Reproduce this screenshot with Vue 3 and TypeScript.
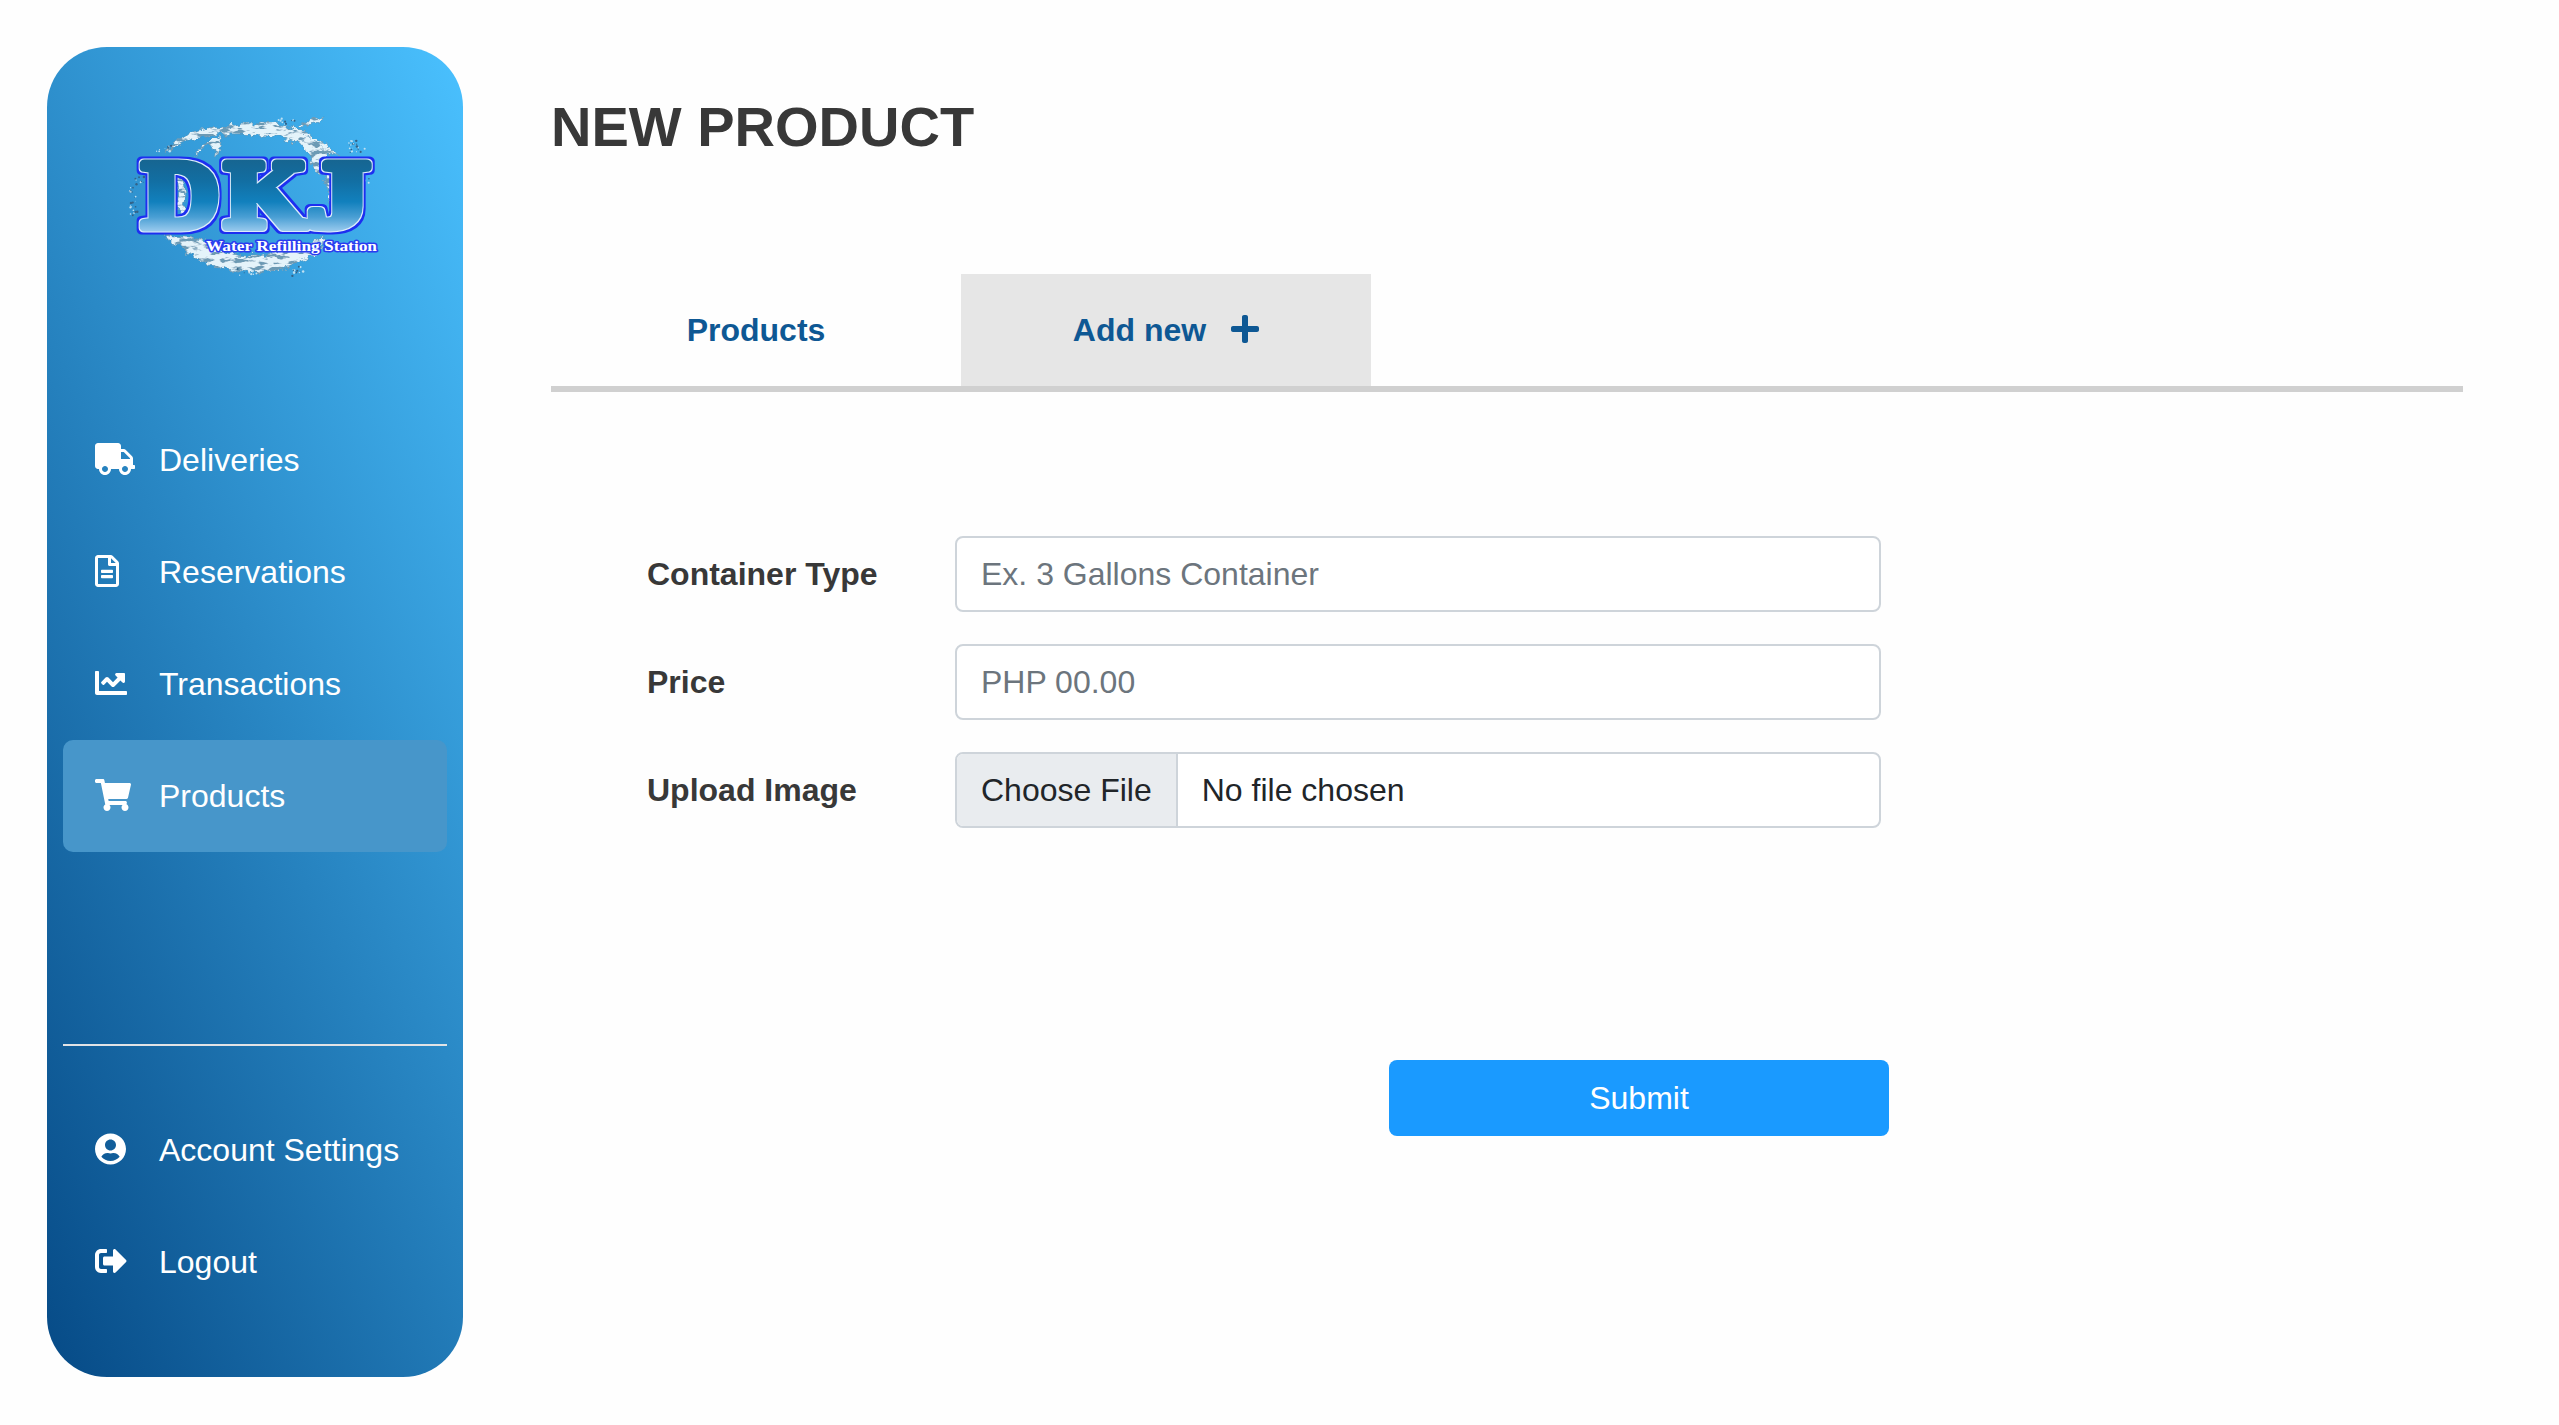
<script setup lang="ts">
interface NavItem {
  label: string
  viewBox: string
  width: number
  path: string
  active?: boolean
}

const mainNav: NavItem[] = [
  {
    label: 'Deliveries',
    viewBox: '0 0 640 512',
    width: 40,
    path: 'M624 352h-16V243.900c0-12.700-5.100-24.900-14.100-33.900L494 110.100c-9-9-21.200-14.100-33.900-14.100H416V48c0-26.500-21.500-48-48-48H48C21.500 0 0 21.500 0 48v320c0 26.500 21.500 48 48 48h16c0 53 43 96 96 96s96-43 96-96h128c0 53 43 96 96 96s96-43 96-96h48c8.800 0 16-7.200 16-16v-32c0-8.800-7.200-16-16-16zM160 464c-26.500 0-48-21.500-48-48s21.500-48 48-48 48 21.500 48 48-21.500 48-48 48zm320 0c-26.500 0-48-21.500-48-48s21.500-48 48-48 48 21.500 48 48-21.500 48-48 48zm80-208H416V144h44.100l99.900 99.900V256z',
  },
  {
    label: 'Reservations',
    viewBox: '0 0 384 512',
    width: 24,
    path: 'M288 248v28c0 6.600-5.400 12-12 12H108c-6.600 0-12-5.400-12-12v-28c0-6.600 5.400-12 12-12h168c6.600 0 12 5.400 12 12zm-12 72H108c-6.600 0-12 5.400-12 12v28c0 6.600 5.400 12 12 12h168c6.600 0 12-5.400 12-12v-28c0-6.600-5.400-12-12-12zm108-188.100V464c0 26.500-21.500 48-48 48H48c-26.500 0-48-21.500-48-48V48C0 21.500 21.500 0 48 0h204.100C264.800 0 277 5.100 286 14.100L369.900 98c9 8.900 14.100 21.200 14.100 33.900zm-128-80V128h76.100L256 51.900zM336 464V176H232c-13.300 0-24-10.700-24-24V48H48v416h288z',
  },
  {
    label: 'Transactions',
    viewBox: '0 0 512 512',
    width: 32,
    path: 'M496 384H64V80c0-8.840-7.160-16-16-16H16C7.160 64 0 71.160 0 80v336c0 17.670 14.330 32 32 32h464c8.840 0 16-7.160 16-16v-32c0-8.840-7.160-16-16-16zM464 96H345.940c-21.380 0-32.090 25.850-16.970 40.970l32.400 32.400L288 242.750l-73.370-73.370c-12.500-12.500-32.760-12.500-45.250 0l-68.690 68.690c-6.250 6.250-6.250 16.380 0 22.630l22.620 22.620c6.250 6.250 16.380 6.250 22.630 0L192 237.250l73.370 73.370c12.500 12.500 32.760 12.500 45.250 0l96-96 32.400 32.400c15.120 15.120 40.970 4.410 40.970-16.970V112c.01-8.840-7.150-16-15.990-16z',
  },
  {
    label: 'Products',
    viewBox: '0 0 576 512',
    width: 36,
    active: true,
    path: 'M528.120 301.319l47.273-208C578.806 78.301 567.391 64 551.990 64H159.208l-9.166-44.810C147.758 8.021 137.930 0 126.529 0H24C10.745 0 0 10.745 0 24v16c0 13.255 10.745 24 24 24h69.883l70.248 343.435C147.325 417.100 136 435.222 136 456c0 30.928 25.072 56 56 56s56-25.072 56-56c0-15.674-6.447-29.835-16.824-40h209.647C430.447 426.165 424 440.326 424 456c0 30.928 25.072 56 56 56s56-25.072 56-56c0-22.172-12.888-41.332-31.579-50.405l5.517-24.276c3.413-15.018-8.002-29.319-23.403-29.319H218.117l-6.545-32h293.145c11.206 0 20.920-7.754 23.403-18.681z',
  },
]

const accountNav: NavItem[] = [
  {
    label: 'Account Settings',
    viewBox: '0 0 496 512',
    width: 31,
    path: 'M248 8C111 8 0 119 0 256s111 248 248 248 248-111 248-248S385 8 248 8zm0 96c48.600 0 88 39.400 88 88s-39.400 88-88 88-88-39.400-88-88 39.400-88 88-88zm0 344c-58.700 0-111.300-26.600-146.500-68.200 18.800-35.400 55.600-59.800 98.500-59.800 2.400 0 4.800.4 7.100 1.100 13 4.200 26.600 6.900 40.900 6.900 14.300 0 28-2.700 40.900-6.900 2.300-.7 4.700-1.100 7.100-1.100 42.900 0 79.700 24.400 98.500 59.800C359.300 421.400 306.700 448 248 448z',
  },
  {
    label: 'Logout',
    viewBox: '0 0 512 512',
    width: 32,
    path: 'M497 273L329 441c-15 15-41 4.500-41-17v-96H152c-13.300 0-24-10.700-24-24v-96c0-13.300 10.700-24 24-24h136V88c0-21.400 25.900-32 41-17l168 168c9.300 9.400 9.300 24.600 0 34zM192 436v-40c0-6.600-5.400-12-12-12H96c-17.700 0-32-14.300-32-32V160c0-17.700 14.300-32 32-32h84c6.600 0 12-5.400 12-12V76c0-6.600-5.400-12-12-12H96c-53 0-96 43-96 96v192c0 53 43 96 96 96h84c6.600 0 12-5.400 12-12z',
  },
]

// Letters of the wordmark: x position and drawn width
const letters = [
  { char: 'D', x: 98, width: 228 },
  { char: 'K', x: 346, width: 244 },
  { char: 'J', x: 594, width: 184 },
]

// Water ring segments
const splashes = [
  { d: 'M168 158 C190 108 260 82 330 86 C420 58 520 66 590 100 C640 122 672 160 700 176 C670 158 640 158 604 150 C560 118 500 108 430 106 C360 96 300 104 250 118 C215 126 190 140 168 158Z' },
  { d: 'M590 110 C640 130 690 200 688 270 C690 320 680 350 660 356 C664 310 656 260 640 230 C606 210 600 160 570 130Z' },
  { d: 'M566 78 C590 58 620 54 642 48 C636 66 610 76 566 78Z' },
  { d: 'M165 404 C215 424 270 400 330 446 C400 480 500 470 640 410 C650 440 620 470 560 490 C500 520 400 520 330 504 C280 500 240 460 205 432 C190 430 175 420 165 404Z' },
  { d: 'M196 226 C232 226 230 290 222 320 C232 340 236 356 216 362 C198 340 210 290 196 226Z' },
  { d: 'M330 110 C336 130 330 160 316 176 C322 150 316 136 300 132 C280 138 266 156 252 166 C268 138 296 120 330 110Z' },
]

// Fixed pseudo-random droplets scattered around the ring
function droplets() {
  const out: { x: number; y: number; r: number; c: string }[] = []
  let s = 17
  const rnd = () => {
    s = (s * 16807) % 2147483647
    return s / 2147483647
  }
  const areas = [
    [60, 250, 22, 100, 22],
    [76, 228, 26, 26, 8],
    [715, 120, 52, 38, 22],
    [545, 500, 35, 30, 12],
    [380, 505, 60, 22, 12],
    [120, 134, 66, 20, 8],
    [500, 55, 60, 20, 10],
    [764, 235, 14, 16, 3],
  ]
  for (const [x, y, w, h, n] of areas) {
    for (let i = 0; i < n; i++) {
      out.push({ x: x + rnd() * w, y: y + rnd() * h, r: 1.2 + rnd() * 2.6, c: rnd() > 0.45 ? '#bfe0f2' : '#336287' })
    }
  }
  return out
}
const drops = droplets()
</script>

<template>
  <div class="page">
    <aside class="sidebar">
      <svg class="logo" viewBox="0 0 870 570" width="290" height="190">
        <defs>
          <linearGradient id="wordFill" gradientUnits="userSpaceOnUse" x1="0" y1="172" x2="0" y2="402">
            <stop offset="0" stop-color="#17648f" />
            <stop offset="0.3" stop-color="#126ea2" />
            <stop offset="0.58" stop-color="#1180bd" />
            <stop offset="0.78" stop-color="#4a9fd4" />
            <stop offset="1" stop-color="#a9d3f3" />
          </linearGradient>
          <filter id="rough" x="-10%" y="-10%" width="120%" height="120%">
            <feTurbulence type="fractalNoise" baseFrequency="0.05" numOctaves="3" seed="4" result="n" />
            <feDisplacementMap in="SourceGraphic" in2="n" scale="30" xChannelSelector="R" yChannelSelector="G" result="shape" />
            <feTurbulence type="fractalNoise" baseFrequency="0.03 0.08" numOctaves="3" seed="9" result="grain" />
            <feColorMatrix in="grain" type="matrix" values="0 0 0 0 0.15  0 0 0 0 0.32  0 0 0 0 0.46  0 7 0 0 -3.500" result="veins" />
            <feComposite in="veins" in2="shape" operator="in" result="veinsIn" />
            <feMerge>
              <feMergeNode in="shape" />
              <feMergeNode in="veinsIn" />
            </feMerge>
          </filter>
          <!-- White rim, then a blue rim, grown round the letters -->
          <filter id="rims" filterUnits="userSpaceOnUse" x="60" y="150" width="760" height="275" color-interpolation-filters="sRGB">
            <feMorphology in="SourceAlpha" operator="dilate" radius="4" result="a1" />
            <feFlood flood-color="#dcecfa" />
            <feComposite in2="a1" operator="in" result="white" />
            <feMorphology in="SourceAlpha" operator="dilate" radius="8" result="a2" />
            <feFlood flood-color="#1d2ff0" />
            <feComposite in2="a2" operator="in" result="blue" />
            <feMerge>
              <feMergeNode in="blue" />
              <feMergeNode in="white" />
              <feMergeNode in="SourceGraphic" />
            </feMerge>
          </filter>
        </defs>
        <g filter="url(#rough)" fill="#e4f3fa" stroke="#5c93b4" stroke-width="2">
          <path v-for="(s, i) in splashes" :key="i" :d="s.d" />
        </g>
        <circle v-for="(d, i) in drops" :key="'d' + i" :cx="d.x" :cy="d.y" :r="d.r" :fill="d.c" />
        <g class="word" filter="url(#rims)">
          <text
            v-for="l in letters" :key="l.char" :x="l.x" y="381" :textLength="l.width"
            lengthAdjust="spacingAndGlyphs" fill="url(#wordFill)" stroke="url(#wordFill)"
          >{{ l.char }}</text>
        </g>
        <text class="tagline" x="288" y="452" textLength="513" lengthAdjust="spacingAndGlyphs">Water Refilling Station</text>
      </svg>

      <nav class="nav">
        <a v-for="item in mainNav" :key="item.label" class="nav-item" :class="{ active: item.active }">
          <span class="nav-icon">
            <svg :viewBox="item.viewBox" :width="item.width" height="32"><path fill="currentColor" :d="item.path" /></svg>
          </span>
          <span>{{ item.label }}</span>
        </a>
      </nav>
      <nav class="nav account">
        <a v-for="item in accountNav" :key="item.label" class="nav-item">
          <span class="nav-icon">
            <svg :viewBox="item.viewBox" :width="item.width" height="32"><path fill="currentColor" :d="item.path" /></svg>
          </span>
          <span>{{ item.label }}</span>
        </a>
      </nav>
    </aside>

    <main class="content">
      <h1>NEW PRODUCT</h1>
      <div class="tabs">
        <a class="tab">Products</a>
        <a class="tab selected">
          <span>Add new</span>
          <svg viewBox="0 0 448 512" width="28" height="32">
            <path fill="currentColor" d="M416 208H272V64c0-17.670-14.330-32-32-32h-32c-17.670 0-32 14.330-32 32v144H32c-17.670 0-32 14.330-32 32v32c0 17.670 14.330 32 32 32h144v144c0 17.670 14.330 32 32 32h32c17.670 0 32-14.330 32-32V304h144c17.670 0 32-14.330 32-32v-32c0-17.670-14.330-32-32-32z" />
          </svg>
        </a>
      </div>

      <form class="form" @submit.prevent>
        <div class="row">
          <label>Container Type</label>
          <input class="control" type="text" placeholder="Ex. 3 Gallons Container" />
        </div>
        <div class="row">
          <label>Price</label>
          <input class="control" type="text" placeholder="PHP 00.00" />
        </div>
        <div class="row">
          <label>Upload Image</label>
          <div class="control file">
            <span class="choose">Choose File</span>
            <span class="filename">No file chosen</span>
          </div>
        </div>
        <button class="submit" type="submit">Submit</button>
      </form>
    </main>
  </div>
</template>

<style>
body {
  margin: 0;
  background: #fefefe;
}
</style>

<style scoped>
.page {
  box-sizing: border-box;
  display: flex;
  height: 1425px;
  padding: 47px 96px 48px 47px;
  overflow: hidden;
  font-family: "Liberation Sans", Arial, sans-serif;
  font-size: 32px;
  background: #fefefe;
}
.sidebar {
  box-sizing: border-box;
  display: flex;
  flex-direction: column;
  flex: none;
  width: 416px;
  height: 1330px;
  padding: 53px 16px 0;
  border-radius: 60px;
  color: #fff;
  background: linear-gradient(65deg, #064a86, #4ac1ff);
}
.logo {
  display: block;
  flex: none;
  margin: 0 0 114px 47px;
}
.word {
  font-family: "Liberation Serif", serif;
  font-weight: 700;
  font-size: 288px;
  stroke-width: 27px;
  stroke-linejoin: round;
}
.tagline {
  font-family: "Liberation Serif", serif;
  font-weight: 700;
  font-size: 46px;
  fill: #fff;
  stroke: #2a3cf0;
  stroke-width: 9px;
  stroke-linejoin: round;
  paint-order: stroke;
}
.nav-item {
  box-sizing: border-box;
  display: flex;
  align-items: center;
  height: 112px;
  padding-left: 32px;
  border-radius: 10px;
  white-space: nowrap;
}
.nav-item.active {
  background: #4796ca;
}
.nav-icon {
  display: flex;
  width: 64px;
  margin-bottom: 2px;
}
.account {
  margin-top: 192px;
  padding-top: 48px;
  border-top: 2px solid #e1e3e6;
}
.content {
  flex: 1;
  margin-left: 88px;
}
h1 {
  margin: 48px 0 0;
  font-size: 56px;
  line-height: 64px;
  font-weight: 700;
  color: #383838;
}
.tabs {
  display: flex;
  margin-top: 115px;
  border-bottom: 6px solid #d0d0d0;
}
.tab {
  display: flex;
  align-items: center;
  justify-content: center;
  gap: 25px;
  width: 410px;
  height: 112px;
  font-weight: 700;
  color: #0e5894;
}
.tab svg {
  margin-bottom: 2px;
}
.tab.selected {
  background: #e6e6e6;
}
.form {
  display: flex;
  flex-direction: column;
  gap: 32px;
  width: 1242px;
  margin: 144px 0 0 96px;
}
.row {
  display: flex;
  align-items: center;
}
label {
  width: 308px;
  font-weight: 700;
  color: #383838;
}
.control {
  box-sizing: border-box;
  width: 926px;
  height: 76px;
  padding: 0 24px;
  border: 2px solid #ced4da;
  border-radius: 8px;
  outline: none;
  font: inherit;
  color: #212529;
  background: #fff;
}
.control::placeholder {
  color: #6c757d;
  opacity: 1;
}
.file {
  display: flex;
  padding: 0;
  overflow: hidden;
}
.choose,
.filename {
  display: flex;
  align-items: center;
  padding: 0 24px;
}
.choose {
  border-right: 2px solid #ced4da;
  background: #e9ecef;
}
.submit {
  align-self: flex-end;
  width: 500px;
  height: 76px;
  margin-top: 200px;
  padding: 0;
  border: 0;
  border-radius: 8px;
  font: inherit;
  color: #fff;
  background: #1a9aff;
}
</style>
